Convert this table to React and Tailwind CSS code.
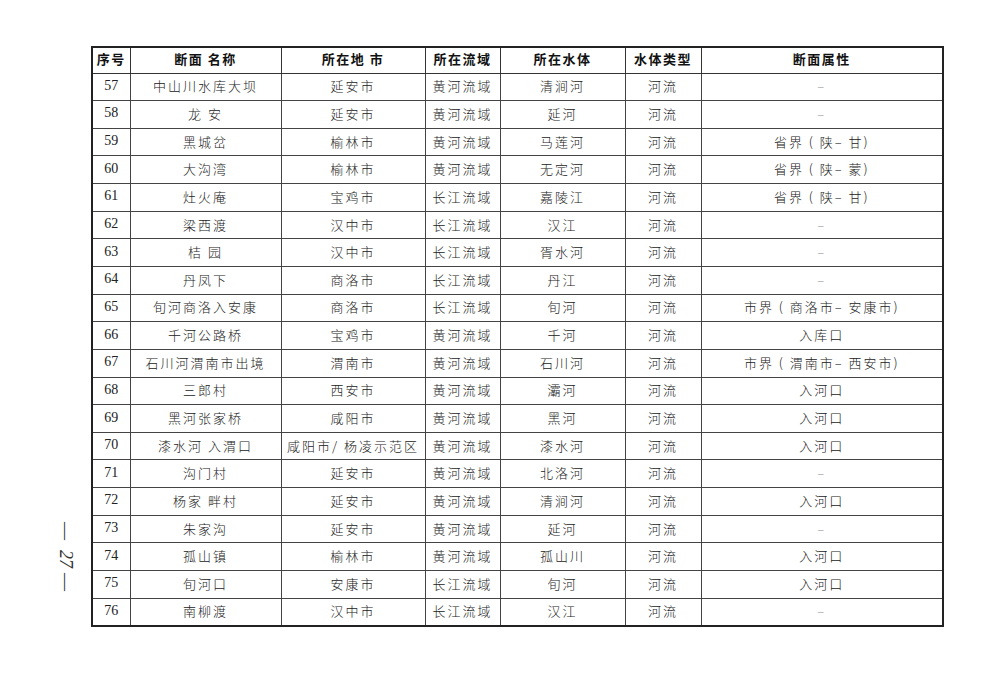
const rows = [
  ['57', '中山川水库大坝', '延安市', '黄河流域', '清涧河', '河流', '–'],
  ['58', '龙 安', '延安市', '黄河流域', '延河', '河流', '–'],
  ['59', '黑城岔', '榆林市', '黄河流域', '马莲河', '河流', '省界 ( 陕– 甘)'],
  ['60', '大沟湾', '榆林市', '黄河流域', '无定河', '河流', '省界 ( 陕– 蒙)'],
  ['61', '灶火庵', '宝鸡市', '长江流域', '嘉陵江', '河流', '省界 ( 陕– 甘)'],
  ['62', '梁西渡', '汉中市', '长江流域', '汉江', '河流', '–'],
  ['63', '桔 园', '汉中市', '长江流域', '胥水河', '河流', '–'],
  ['64', '丹凤下', '商洛市', '长江流域', '丹江', '河流', '–'],
  ['65', '旬河商洛入安康', '商洛市', '长江流域', '旬河', '河流', '市界 ( 商洛市– 安康市)'],
  ['66', '千河公路桥', '宝鸡市', '黄河流域', '千河', '河流', '入库口'],
  ['67', '石川河渭南市出境', '渭南市', '黄河流域', '石川河', '河流', '市界 ( 渭南市– 西安市)'],
  ['68', '三郎村', '西安市', '黄河流域', '灞河', '河流', '入河口'],
  ['69', '黑河张家桥', '咸阳市', '黄河流域', '黑河', '河流', '入河口'],
  ['70', '漆水河 入渭口', '咸阳市/ 杨凌示范区', '黄河流域', '漆水河', '河流', '入河口'],
  ['71', '沟门村', '延安市', '黄河流域', '北洛河', '河流', '–'],
  ['72', '杨家 畔村', '延安市', '黄河流域', '清涧河', '河流', '入河口'],
  ['73', '朱家沟', '延安市', '黄河流域', '延河', '河流', '–'],
  ['74', '孤山镇', '榆林市', '黄河流域', '孤山川', '河流', '入河口'],
  ['75', '旬河口', '安康市', '长江流域', '旬河', '河流', '入河口'],
  ['76', '南柳渡', '汉中市', '长江流域', '汉江', '河流', '–'],
];

const headers = ['序号', '断面 名称', '所在地 市', '所在流域', '所在水体', '水体类型', '断面属性'];
const widths = ['w-[38px]', 'w-[151px]', 'w-[144px]', 'w-[75px]', 'w-[125px]', 'w-[76px]', 'w-[242px]'];

const cjk = "font-['Noto_Sans_CJK_SC',sans-serif]";
const serif = "font-['Liberation_Serif','Noto_Sans_CJK_SC',serif]";

export default function App() {
  return (
    <div className="flex h-[682px] w-[988px] bg-white pt-[46px] text-[#222]">
      {/* page number in the left margin, rotated */}
      <div className="flex w-[91px] justify-end pt-[476px] pr-[16px]">
        <div
          className={`${serif} text-[18px] leading-none whitespace-nowrap text-[#333] [writing-mode:vertical-rl]`}
        >
          <span className="inline-block">—</span>
          <span className="inline-block mt-[10px] mb-[5px] italic">27</span>
          <span className="inline-block">—</span>
        </div>
      </div>
      <div>
        <table className="table-fixed border-collapse border-2 border-[#222]">
          <colgroup>
            {widths.map((w, i) => (
              <col key={i} className={w} />
            ))}
          </colgroup>
          <thead>
            <tr className="h-[26px]">
              {headers.map((h) => (
                <th
                  key={h}
                  className={`${cjk} border border-[#333] p-0 pb-[3px] text-center text-[13px] leading-none font-bold tracking-[1.5px] text-[#111]`}
                >
                  {h}
                </th>
              ))}
            </tr>
          </thead>
          <tbody>
            {rows.map((row) => (
              <tr key={row[0]} className="h-[27.65px]">
                {row.map((cell, i) => (
                  <td
                    key={i}
                    className={`border border-[#444] p-0 pb-[2px] text-center leading-none ${
                      i === 0
                        ? `${serif} text-[14px]`
                        : `${cjk} text-[13px] font-light tracking-[2px]`
                    } ${cell === '–' ? 'text-[#999]' : ''}`}
                  >
                    {cell}
                  </td>
                ))}
              </tr>
            ))}
          </tbody>
        </table>
      </div>
    </div>
  );
}
